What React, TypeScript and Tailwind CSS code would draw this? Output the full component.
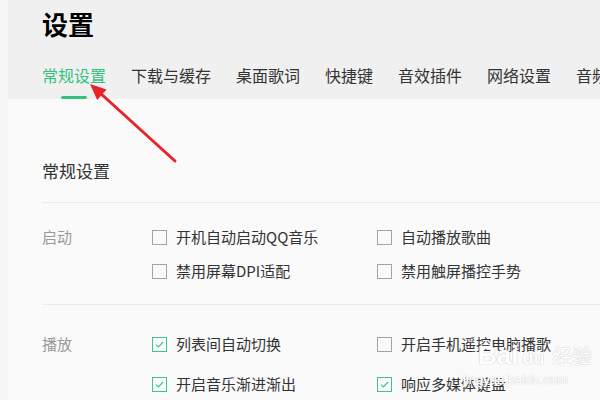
import React from 'react';

const tabs = ['常规设置', '下载与缓存', '桌面歌词', '快捷键', '音效插件', '网络设置', '音频设备'];

const Check = ({ checked, label }: { checked?: boolean; label: string }) => (
  <div className="flex items-center h-6 w-[225px] shrink-0">
    <span
      className={`w-[15px] h-[15px] border flex items-center justify-center shrink-0 ${
        checked ? 'border-[#3cc68a]' : 'border-[#a3a3a3]'
      }`}
    >
      {checked && (
        <svg width="9" height="7" viewBox="0 0 9 7" fill="none">
          <path d="M1 3.6 L3.4 6 L8 1" stroke="#3cc68a" strokeWidth="1.2" />
        </svg>
      )}
    </span>
    <span className="ml-[9px] text-[15px] leading-6 text-[#333]">{label}</span>
  </div>
);

const App: React.FC = () => {
  return (
    <div
      className="relative w-[600px] h-[400px] overflow-hidden flex bg-[#f6f6f6]"
      style={{ fontFamily: '"Microsoft YaHei", "Noto Sans CJK SC", sans-serif' }}
    >
      <div className="w-2 shrink-0 bg-[#f6f6f6]" />
      <div className="flex-1 flex flex-col min-w-0">
        <div className="h-[99px] bg-[#f0f0f0] pl-[34px] pt-[9px] shrink-0">
          <h1 className="text-[26px] leading-[30px] font-bold text-black">设置</h1>
          <div className="flex gap-[25px] mt-[24px] whitespace-nowrap">
            {tabs.map((t, i) => (
              <div key={t} className="flex flex-col items-center shrink-0">
                <span className={`text-[16px] leading-6 ${i === 0 ? 'text-[#31c27c]' : 'text-[#333]'}`}>{t}</span>
                <span className={`mt-[9px] h-[3px] w-[26px] rounded-full ${i === 0 ? 'bg-[#31c27c]' : ''}`} />
              </div>
            ))}
          </div>
        </div>

        <div className="flex-1 bg-[#fafafa] pl-[34px] pt-[60px]">
          <h2 className="text-[17px] leading-6 text-[#333]">常规设置</h2>
          <div className="mt-[19px] h-px bg-[#ebebeb]" />

          <div className="flex pt-[22px] pb-[21px]">
            <div className="w-[110px] shrink-0 text-[15px] leading-6 text-[#999]">启动</div>
            <div className="flex flex-col gap-[10px]">
              <div className="flex">
                <Check label="开机自动启动QQ音乐" />
                <Check label="自动播放歌曲" />
              </div>
              <div className="flex">
                <Check label="禁用屏幕DPI适配" />
                <Check label="禁用触屏播控手势" />
              </div>
            </div>
          </div>
          <div className="h-px bg-[#ebebeb]" />

          <div className="flex pt-[27px]">
            <div className="w-[110px] shrink-0 text-[15px] leading-6 text-[#999]">播放</div>
            <div className="flex flex-col gap-[16px]">
              <div className="flex">
                <Check checked label="列表间自动切换" />
                <Check label="开启手机遥控电脑播歌" />
              </div>
              <div className="flex">
                <Check checked label="开启音乐渐进渐出" />
                <Check checked label="响应多媒体键盘" />
              </div>
            </div>
          </div>
        </div>
      </div>

      {/* watermark */}
      <div className="absolute left-[478px] top-[340px] flex items-end select-none pointer-events-none">
        <span
          className="text-[26px] leading-[30px] font-bold text-white"
          style={{ fontFamily: '"Liberation Sans", sans-serif', textShadow: '0 0 1px #c8c8c8, 0 0 1px #c8c8c8' }}
        >
          Bai
        </span>
        <span
          className="ml-1 text-[18px] leading-[24px] font-bold text-white"
          style={{ fontFamily: '"Liberation Sans", sans-serif', textShadow: '0 0 1px #c8c8c8, 0 0 1px #c8c8c8' }}
        >
          du
        </span>
        <span
          className="ml-2 text-[20px] leading-[28px] text-white"
          style={{ textShadow: '0 0 1px #c8c8c8, 0 0 1px #c8c8c8' }}
        >
          经验
        </span>
      </div>
      <div
        className="absolute left-[463px] top-[372px] text-[13px] leading-4 text-white select-none pointer-events-none"
        style={{ fontFamily: '"Liberation Sans", sans-serif', textShadow: '0 0 1px #cfcfcf, 0 0 1px #cfcfcf' }}
      >
        jingyan.baidu.com
      </div>

      {/* red annotation arrow */}
      <svg className="absolute left-0 top-0 pointer-events-none" width="600" height="400">
        <line x1="175" y1="161" x2="99" y2="92" stroke="#e8232a" strokeWidth="3" strokeLinecap="round" />
        <polygon points="90,84 106.6,89.5 97.2,99.9" fill="#e8232a" />
      </svg>
    </div>
  );
};

export default App;
